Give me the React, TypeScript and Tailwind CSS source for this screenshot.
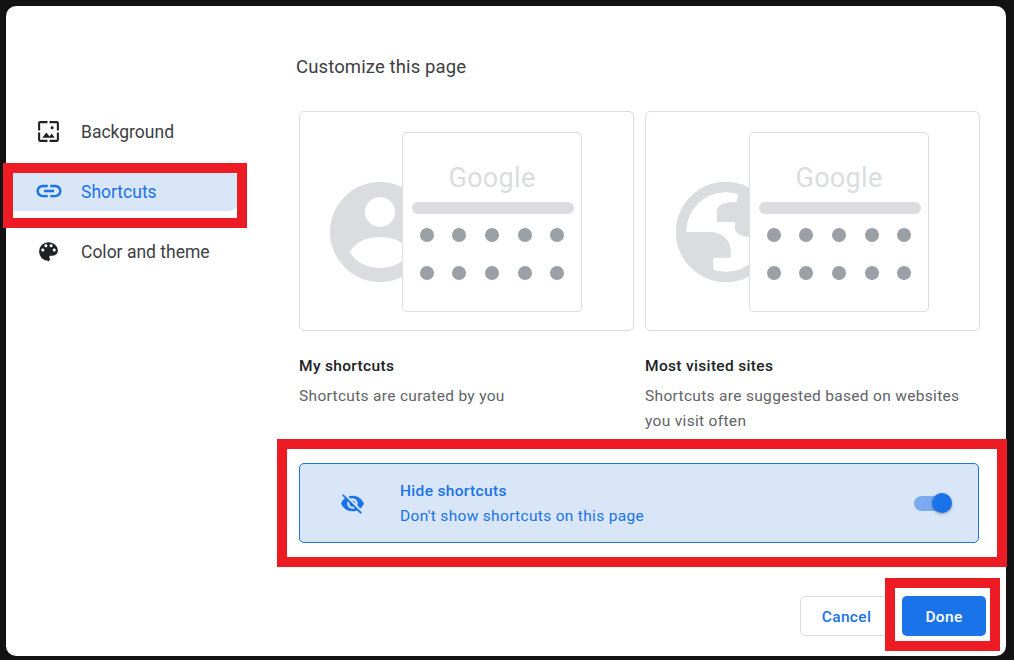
import React from "react";

const Preview = ({ globe }: { globe?: boolean }) => (
  <div
    className={
      globe
        ? "relative flex h-[220px] w-[335px] items-center justify-end rounded-[5px] border border-[#dadce0] pr-[50px]"
        : "relative flex h-[220px] w-[335px] items-center justify-end rounded-[5px] border border-[#dadce0] pr-[51px]"
    }
  >
    <svg className="absolute left-[30px] top-[70px] h-[100px] w-[100px]" viewBox="0 0 100 100">
      <circle cx="50" cy="50" r="50" fill="#dadce0" />
      {globe ? (
        <>
          <circle cx="50" cy="50" r="40" fill="#fff" />
          <path d="M9.7 50H34C46 50 54.7 58 54.7 68.3V75.7H37.3V90A41 41 0 0 1 9.7 50Z" fill="#dadce0" />
          <path d="M62.3 10L60.7 20C50 20 40.7 22 40.7 30V40H59V46.7C59 51 66 55 74 55L100 60V0Z" fill="#dadce0" />
          <circle cx="50" cy="50" r="45" fill="none" stroke="#dadce0" strokeWidth="10" />
        </>
      ) : (
        <>
          <circle cx="50" cy="30" r="15" fill="#fff" />
          <path d="M20 70C25 60 37 55 50 55C63 55 75 60 80 70C75 80 63 86 50 86C37 86 25 80 20 70Z" fill="#fff" />
        </>
      )}
    </svg>
    <div className="relative mt-[2px] flex h-[180px] w-[180px] flex-col items-center rounded-[5px] border border-[#dadce0] bg-white">
      <div className="mt-[25px] h-[40px] font-['Roboto',sans-serif] text-[27px] leading-[40px] tracking-[0.3px] text-[#dadce0]">
        Google
      </div>
      <div className="ml-[1px] mt-[4px] h-[12px] w-[162px] rounded-full bg-[#dadce0]" />
      <div className="mt-[14px] grid grid-cols-5 gap-x-[18.7px] gap-y-[24px]">
        {Array.from({ length: 10 }).map((_, i) => (
          <div key={i} className="h-[14px] w-[14px] rounded-full bg-[#9aa0a6]" />
        ))}
      </div>
    </div>
  </div>
);

const rowIcon = {
  wallpaper:
    "M4 4h7V2H4c-1.1 0-2 .9-2 2v7h2V4zm6 9l-4 5h12l-3-4-2.03 2.71L10 13zm7-4.5c0-.83-.67-1.5-1.5-1.5S14 7.67 14 8.5s.67 1.5 1.5 1.5S17 9.33 17 8.5zM20 2h-7v2h7v7h2V4c0-1.1-.9-2-2-2zm0 18h-7v2h7c1.1 0 2-.9 2-2v-7h-2v7zM4 13H2v7c0 1.1.9 2 2 2h7v-2H4v-7z",
  link: "M3.9 12c0-1.71 1.39-3.1 3.1-3.1h4V7H7c-2.76 0-5 2.24-5 5s2.24 5 5 5h4v-1.9H7c-1.71 0-3.1-1.39-3.1-3.1zM8 13h8v-2H8v2zm9-6h-4v1.9h4c1.71 0 3.1 1.39 3.1 3.1s-1.39 3.1-3.1 3.1h-4V17h4c2.76 0 5-2.24 5-5s-2.24-5-5-5z",
  palette:
    "M12 3a9 9 0 0 0 0 18c.83 0 1.5-.67 1.5-1.5 0-.39-.15-.74-.39-1.01-.23-.26-.38-.61-.38-.99 0-.83.67-1.5 1.5-1.5H16c2.76 0 5-2.24 5-5 0-4.42-4.03-8-9-8zm-5.5 9c-.83 0-1.5-.67-1.5-1.5S5.67 9 6.5 9 8 9.67 8 10.5 7.33 12 6.5 12zm3-4C8.67 8 8 7.33 8 6.5S8.67 5 9.5 5s1.5.67 1.5 1.5S10.33 8 9.5 8zm5 0c-.83 0-1.5-.67-1.5-1.5S13.67 5 14.5 5s1.5.67 1.5 1.5S15.33 8 14.5 8zm3 4c-.83 0-1.5-.67-1.5-1.5S16.67 9 17.5 9s1.5.67 1.5 1.5-.67 1.5-1.5 1.5z",
};

const NavRow = ({ d, label, active, size }: { d: string; label: string; active?: boolean; size: string }) => (
  <div
    className={
      active
        ? "flex h-10 w-[234px] items-center rounded-r-[12px] bg-[#d9e6f7] text-[#1a73e8]"
        : "flex h-10 w-[234px] items-center text-[#3c4043]"
    }
  >
    <div className="flex w-[75px] shrink-0 items-center justify-center pl-[10px]">
      <svg className={active ? `${size} text-[#1a73e8]` : `${size} text-[#202124]`} viewBox="0 0 24 24" fill="currentColor">
        <path d={d} />
      </svg>
    </div>
    <span className="mt-[4px] block text-[17.5px] leading-none">{label}</span>
  </div>
);

export default function App() {
  return (
    <div className="relative h-[660px] w-[1014px] overflow-hidden bg-[#121212] p-[6px] font-['Roboto',sans-serif]">
      <div className="flex h-[650px] w-[1000px] rounded-[10px] bg-white">
        <aside className="flex w-[290px] shrink-0 flex-col gap-5 pt-[105px]">
          <NavRow d={rowIcon.wallpaper} label="Background" size="h-[25px] w-[25px]" />
          <NavRow d={rowIcon.link} label="Shortcuts" active size="h-[30px] w-[30px]" />
          <NavRow d={rowIcon.palette} label="Color and theme" size="h-[25px] w-[25px]" />
        </aside>
        <main className="flex min-w-0 flex-1 flex-col">
          <h1 className="mt-[50px] text-[18.5px] leading-[22px] tracking-[0.12px] text-[#3c4043]">Customize this page</h1>
          <div className="mt-[33px] flex gap-[11px] pl-[3px]">
            <Preview />
            <Preview globe />
          </div>
          <div className="mt-[24px] flex gap-[11px] pl-[3px]">
            <div className="w-[335px]">
              <div className="text-[15.5px] font-medium leading-[22px] tracking-[0.33px] text-[#202124]">My shortcuts</div>
              <div className="mt-[7px] text-[15.5px] leading-[25px] tracking-[0.32px] text-[#5f6368]">
                Shortcuts are curated by you
              </div>
            </div>
            <div className="w-[335px]">
              <div className="text-[15.5px] font-medium leading-[22px] tracking-[0.33px] text-[#202124]">Most visited sites</div>
              <div className="mt-[7px] w-[325px] text-[15.5px] leading-[25px] tracking-[0.32px] text-[#5f6368]">
                Shortcuts are suggested based on websites you visit often
              </div>
            </div>
          </div>
          <div className="ml-[3px] mt-[29px] flex h-[80px] w-[680px] items-center rounded-[5px] border border-[#1a73e8] bg-[#d9e6f7]">
            <svg className="ml-[40px] h-[25px] w-[25px] shrink-0 text-[#1a73e8]" viewBox="0 0 24 24" fill="currentColor">
              <path d="M12 7c2.76 0 5 2.24 5 5 0 .65-.13 1.26-.36 1.83l2.92 2.92c1.51-1.26 2.7-2.89 3.43-4.75-1.73-4.39-6-7.5-11-7.5-1.4 0-2.74.25-3.98.7l2.16 2.16C10.74 7.13 11.35 7 12 7zM2 4.27l2.28 2.28.46.46C3.08 8.3 1.78 10.02 1 12c1.73 4.39 6 7.5 11 7.5 1.55 0 3.03-.3 4.38-.84l.42.42L19.73 22 21 20.73 3.27 3 2 4.27zM7.53 9.8l1.55 1.55c-.05.21-.08.43-.08.65 0 1.66 1.34 3 3 3 .22 0 .44-.03.65-.08l1.55 1.55c-.67.33-1.41.53-2.2.53-2.76 0-5-2.24-5-5 0-.79.2-1.53.53-2.2zm4.31-.78l3.15 3.15.02-.16c0-1.66-1.34-3-3-3l-.17.01z" />
            </svg>
            <div className="ml-[35px] flex-1 pt-[2px] text-[#1a73e8]">
              <div className="text-[15.5px] font-medium leading-[25px] tracking-[0.33px]">Hide shortcuts</div>
              <div className="text-[15.5px] leading-[25px] tracking-[0.32px]">Don't show shortcuts on this page</div>
            </div>
            <div className="relative mr-[26px] flex h-[20px] w-[39px] items-center">
              <div className="ml-[1px] h-[15px] w-[31px] rounded-full bg-[#7baaf0]" />
              <div className="absolute right-0 top-0 h-[20px] w-[20px] rounded-full bg-[#1a73e8] shadow-[0_1px_3px_rgba(60,64,67,0.5)]" />
            </div>
          </div>
          <div className="mt-[53px] flex justify-end gap-[12px] pr-[20px]">
            <button className="h-10 w-[90px] rounded-[5px] border border-[#dadce0] bg-white pl-[3px] pt-[4px] text-[15.5px] font-medium tracking-[0.33px] text-[#1a73e8]">
              Cancel
            </button>
            <button className="h-10 w-[84px] rounded-[5px] bg-[#1a73e8] pt-[4px] text-[15.5px] font-medium tracking-[0.33px] text-white">
              Done
            </button>
          </div>
        </main>
      </div>
      <div className="pointer-events-none absolute left-[3px] top-[163px] h-[65px] w-[244px] border-[10px] border-[#ed1c24]" />
      <div className="pointer-events-none absolute left-[277px] top-[439px] h-[128px] w-[730px] border-[10px] border-[#ed1c24]" />
      <div className="pointer-events-none absolute left-[885px] top-[578px] h-[73px] w-[115px] border-[10px] border-[#ed1c24]" />
    </div>
  );
}
